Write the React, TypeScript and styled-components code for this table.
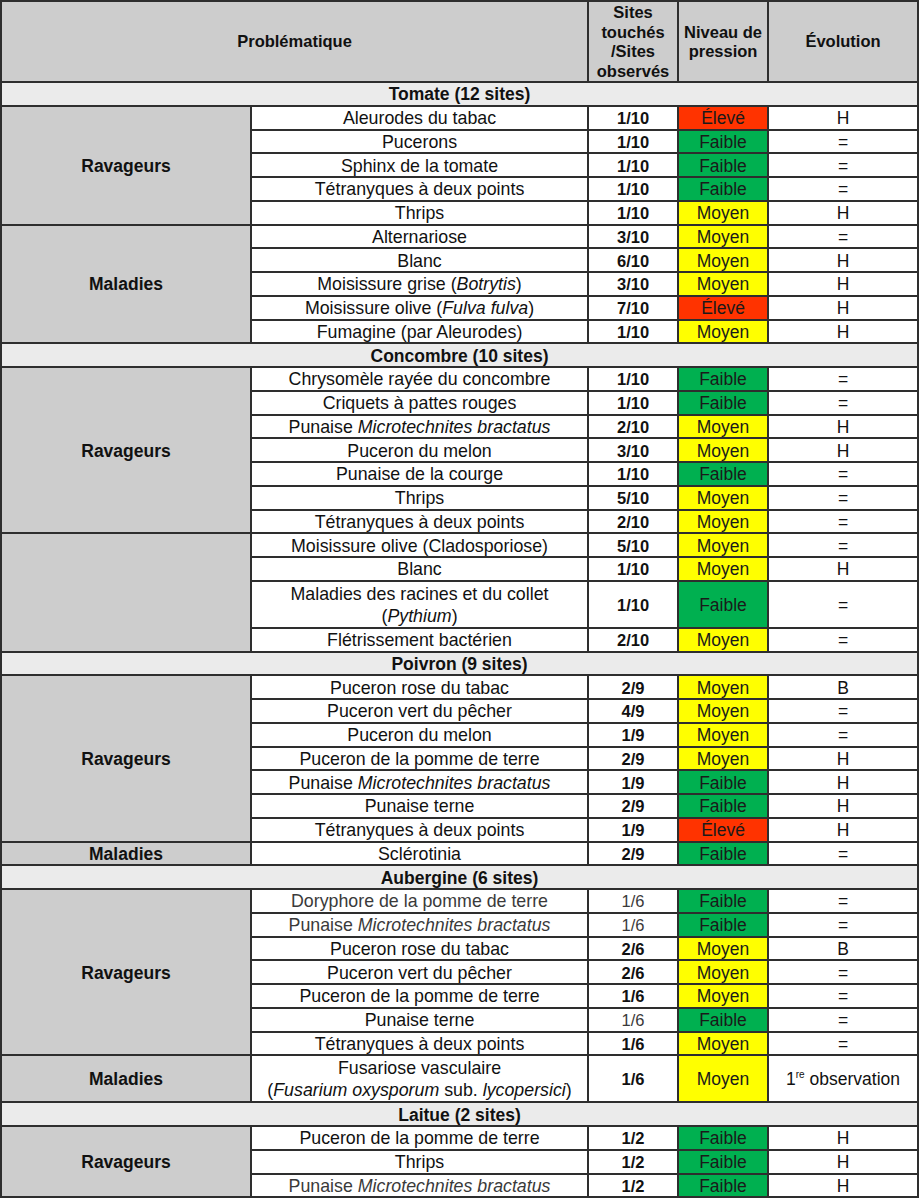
import React from "react";
import styled, { createGlobalStyle } from "styled-components";

const Global = createGlobalStyle`
  html, body { margin: 0; padding: 0; background: #ffffff; }
`;

type Level = "E" | "F" | "M";

const levelInfo: Record<Level, { label: string; bg: string }> = {
  E: { label: "Élevé", bg: "#ff3300" },
  F: { label: "Faible", bg: "#00b050" },
  M: { label: "Moyen", bg: "#ffff00" },
};

const Table = styled.table`
  border-collapse: collapse;
  table-layout: fixed;
  width: 917px;
  font-family: "Liberation Sans", Arial, sans-serif;
  color: #111111;
  font-size: 17.5px;
`;

const Row = styled.tr<{ $double?: boolean }>`
  height: ${(p) => (p.$double ? "47px" : "23.75px")};
`;

const cellBase = `
  border: 2px solid #2e2e2e;
  padding: 1px 4px 0;
  text-align: center;
  vertical-align: middle;
  line-height: 20px;
  overflow: hidden;
`;

const HeadCell = styled.th`
  ${cellBase}
  background: #cdcdcd;
  font-size: 16.5px;
  font-weight: bold;
  line-height: 19.5px;
  height: 78px;
  padding: 1px 2px 0;
`;

const SectionCell = styled.td`
  ${cellBase}
  background: #ebebeb;
  font-weight: bold;
`;

const CategoryCell = styled.td`
  ${cellBase}
  background: #cdcdcd;
  font-weight: bold;
`;

const NameCell = styled.td<{ $light?: boolean; $double?: boolean }>`
  ${cellBase}
  background: #ffffff;
  white-space: nowrap;
  font-size: 17.8px;
  line-height: ${(p) => (p.$double ? "22px" : "20px")};
  color: ${(p) => (p.$light ? "#3a3a3a" : "#111111")};
`;

const FractionCell = styled.td<{ $light?: boolean }>`
  ${cellBase}
  background: #ffffff;
  font-size: 16.5px;
  font-weight: ${(p) => (p.$light ? "normal" : "bold")};
  color: ${(p) => (p.$light ? "#3a3a3a" : "#111111")};
`;

const LevelCell = styled.td<{ $bg: string }>`
  ${cellBase}
  background: ${(p) => p.$bg};
  color: #1a1a1a;
`;

const EvoCell = styled.td`
  ${cellBase}
  background: #ffffff;
  white-space: nowrap;
`;

const Em = styled.i`
  font-style: italic;
`;

const Sup = styled.sup`
  font-size: 10px;
  vertical-align: 7px;
  line-height: 0;
`;

type Item = {
  name: React.ReactNode;
  frac: string;
  level: Level;
  evo: React.ReactNode;
  double?: boolean;
  lightName?: boolean;
  lightFrac?: boolean;
};

type Group = { label: string; rows: Item[] };
type Section = { title: string; groups: Group[] };

const it = (
  name: React.ReactNode,
  frac: string,
  level: Level,
  evo: React.ReactNode,
  extra: Partial<Item> = {}
): Item => ({ name, frac, level, evo, ...extra });

const Microtechnites = (
  <>
    Punaise <Em>Microtechnites bractatus</Em>
  </>
);

const sections: Section[] = [
  {
    title: "Tomate (12 sites)",
    groups: [
      {
        label: "Ravageurs",
        rows: [
          it("Aleurodes du tabac", "1/10", "E", "H"),
          it("Pucerons", "1/10", "F", "="),
          it("Sphinx de la tomate", "1/10", "F", "="),
          it("Tétranyques à deux points", "1/10", "F", "="),
          it("Thrips", "1/10", "M", "H"),
        ],
      },
      {
        label: "Maladies",
        rows: [
          it("Alternariose", "3/10", "M", "="),
          it("Blanc", "6/10", "M", "H"),
          it(<>Moisissure grise (<Em>Botrytis</Em>)</>, "3/10", "M", "H"),
          it(<>Moisissure olive (<Em>Fulva fulva</Em>)</>, "7/10", "E", "H"),
          it("Fumagine (par Aleurodes)", "1/10", "M", "H"),
        ],
      },
    ],
  },
  {
    title: "Concombre (10 sites)",
    groups: [
      {
        label: "Ravageurs",
        rows: [
          it("Chrysomèle rayée du concombre", "1/10", "F", "="),
          it("Criquets à pattes rouges", "1/10", "F", "="),
          it(Microtechnites, "2/10", "M", "H"),
          it("Puceron du melon", "3/10", "M", "H"),
          it("Punaise de la courge", "1/10", "F", "="),
          it("Thrips", "5/10", "M", "="),
          it("Tétranyques à deux points", "2/10", "M", "="),
        ],
      },
      {
        label: "",
        rows: [
          it("Moisissure olive (Cladosporiose)", "5/10", "M", "="),
          it("Blanc", "1/10", "M", "H"),
          it(
            <>
              Maladies des racines et du collet
              <br />(<Em>Pythium</Em>)
            </>,
            "1/10",
            "F",
            "=",
            { double: true }
          ),
          it("Flétrissement bactérien", "2/10", "M", "="),
        ],
      },
    ],
  },
  {
    title: "Poivron (9 sites)",
    groups: [
      {
        label: "Ravageurs",
        rows: [
          it("Puceron rose du tabac", "2/9", "M", "B"),
          it("Puceron vert du pêcher", "4/9", "M", "="),
          it("Puceron du melon", "1/9", "M", "="),
          it("Puceron de la pomme de terre", "2/9", "M", "H"),
          it(Microtechnites, "1/9", "F", "H"),
          it("Punaise terne", "2/9", "F", "H"),
          it("Tétranyques à deux points", "1/9", "E", "H"),
        ],
      },
      {
        label: "Maladies",
        rows: [it("Sclérotinia", "2/9", "F", "=")],
      },
    ],
  },
  {
    title: "Aubergine (6 sites)",
    groups: [
      {
        label: "Ravageurs",
        rows: [
          it("Doryphore de la pomme de terre", "1/6", "F", "=", {
            lightName: true,
            lightFrac: true,
          }),
          it(Microtechnites, "1/6", "F", "=", {
            lightName: true,
            lightFrac: true,
          }),
          it("Puceron rose du tabac", "2/6", "M", "B"),
          it("Puceron vert du pêcher", "2/6", "M", "="),
          it("Puceron de la pomme de terre", "1/6", "M", "="),
          it("Punaise terne", "1/6", "F", "=", { lightFrac: true }),
          it("Tétranyques à deux points", "1/6", "M", "="),
        ],
      },
      {
        label: "Maladies",
        rows: [
          it(
            <>
              Fusariose vasculaire
              <br />(<Em>Fusarium oxysporum</Em> sub. <Em>lycopersici</Em>)
            </>,
            "1/6",
            "M",
            <>
              1<Sup>re</Sup> observation
            </>,
            { double: true }
          ),
        ],
      },
    ],
  },
  {
    title: "Laitue (2 sites)",
    groups: [
      {
        label: "Ravageurs",
        rows: [
          it("Puceron de la pomme de terre", "1/2", "F", "H"),
          it("Thrips", "1/2", "F", "H"),
          it(Microtechnites, "1/2", "F", "H", { lightName: true }),
        ],
      },
    ],
  },
];

function DataRow({ item, group, first }: { item: Item; group: Group; first: boolean }) {
  const lv = levelInfo[item.level];
  return (
    <Row $double={item.double}>
      {first && <CategoryCell rowSpan={group.rows.length}>{group.label}</CategoryCell>}
      <NameCell $light={item.lightName} $double={item.double}>
        {item.name}
      </NameCell>
      <FractionCell $light={item.lightFrac}>{item.frac}</FractionCell>
      <LevelCell $bg={lv.bg}>{lv.label}</LevelCell>
      <EvoCell>{item.evo}</EvoCell>
    </Row>
  );
}

export default function App() {
  return (
    <>
      <Global />
      <Table>
        <colgroup>
          <col style={{ width: 250 }} />
          <col style={{ width: 337 }} />
          <col style={{ width: 90 }} />
          <col style={{ width: 90 }} />
          <col style={{ width: 150 }} />
        </colgroup>
        <thead>
          <tr>
            <HeadCell colSpan={2}>Problématique</HeadCell>
            <HeadCell>
              Sites
              <br />
              touchés
              <br />
              /Sites
              <br />
              observés
            </HeadCell>
            <HeadCell>
              Niveau de
              <br />
              pression
            </HeadCell>
            <HeadCell>Évolution</HeadCell>
          </tr>
        </thead>
        <tbody>
          {sections.map((s) => (
            <React.Fragment key={s.title}>
              <Row>
                <SectionCell colSpan={5}>{s.title}</SectionCell>
              </Row>
              {s.groups.map((g, gi) =>
                g.rows.map((r, ri) => (
                  <DataRow key={`${s.title}-${gi}-${ri}`} item={r} group={g} first={ri === 0} />
                ))
              )}
            </React.Fragment>
          ))}
        </tbody>
      </Table>
    </>
  );
}
